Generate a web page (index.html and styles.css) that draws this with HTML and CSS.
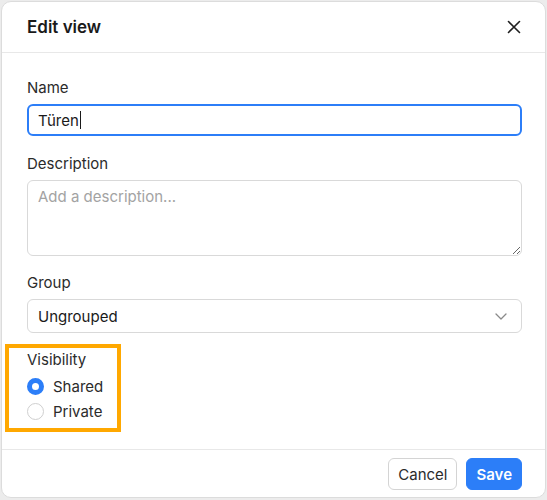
FILE: index.html
```html
<!DOCTYPE html>
<html lang="en">
<head>
    <meta charset="UTF-8">
    <meta name="viewport" content="width=device-width, initial-scale=1.0">
    <title>Edit view</title>
    <link rel="stylesheet" href="styles.css">
</head>
<body>
    <div class="dialog">
        <!-- Dialog header -->
        <div class="dialog-header">
            <h2 class="dialog-title">Edit view</h2>
            <button type="button" class="close-btn" aria-label="Close">
                <svg width="14" height="14" viewBox="0 0 14 14" fill="none" stroke="#1f1f1f" stroke-width="1.6" stroke-linecap="round">
                    <path d="M1.5 1.5 L12.5 12.5 M12.5 1.5 L1.5 12.5"/>
                </svg>
            </button>
        </div>

        <!-- Form fields -->
        <form class="dialog-body" id="edit-view">
            <div class="field">
                <label for="view-name">Name</label>
                <div class="name-box">
                    <span class="name-value">Türen</span><span class="caret"></span>
                </div>
            </div>

            <div class="field">
                <label for="view-description">Description</label>
                <textarea id="view-description" class="text-area" placeholder="Add a description..."></textarea>
            </div>

            <div class="field">
                <label for="view-group">Group</label>
                <div class="select-wrap">
                    <select id="view-group" class="select-input">
                        <option>Ungrouped</option>
                    </select>
                    <svg class="chevron" width="12" height="7" viewBox="0 0 12 7" fill="none" stroke="#8a8a8a" stroke-width="1.3" stroke-linecap="round" stroke-linejoin="round">
                        <path d="M1 1 L6 6 L11 1"/>
                    </svg>
                </div>
            </div>

            <div class="visibility">
                <div class="group-label">Visibility</div>
                <div class="radio-list">
                    <label class="radio-row">
                        <input type="radio" name="visibility" value="shared" checked>
                        <span>Shared</span>
                    </label>
                    <label class="radio-row">
                        <input type="radio" name="visibility" value="private">
                        <span>Private</span>
                    </label>
                </div>
            </div>
        </form>

        <!-- Footer actions -->
        <div class="dialog-footer">
            <button type="button" class="btn btn-cancel">Cancel</button>
            <button type="submit" form="edit-view" class="btn btn-save">Save</button>
        </div>
    </div>
</body>
</html>
```

FILE: styles.css
```css
/* Page */
body {
    margin: 0;
    background-color: #ececec;
    font-family: Inter, "Noto Sans", sans-serif;
    color: #2b2b2b;
}

.dialog {
    width: 545px;
    height: 497px;
    margin: 1px 0 0 1px;
    box-sizing: border-box;
    background-color: #fff;
    border: 1px solid #dcdcdc;
    border-radius: 10px;
    display: flex;
    flex-direction: column;
}

/* Header */
.dialog-header {
    height: 50px;
    display: flex;
    align-items: center;
    justify-content: space-between;
    padding: 0 20px 0 25px;
    border-bottom: 1px solid #e8e8e8;
}

.dialog-title {
    margin: 0;
    font-size: 17px;
    font-weight: 600;
    color: #1a1a1a;
}

.close-btn {
    border: none;
    background: none;
    padding: 4px;
    display: flex;
    cursor: pointer;
}

/* Body */
.dialog-body {
    flex: 1;
    padding: 25px 23px 0 25px;
    display: flex;
    flex-direction: column;
}

.field {
    display: flex;
    flex-direction: column;
    gap: 6px;
    margin-bottom: 18px;
}

.field:nth-child(2) {
    margin-bottom: 17px;
}

label,
.group-label {
    font-size: 15px;
    line-height: 20px;
    color: #2b2b2b;
}

.name-box,
.text-area,
.select-input {
    width: 100%;
    box-sizing: border-box;
    border: 1px solid #d9d9d9;
    border-radius: 6px;
    font-family: inherit;
    font-size: 15px;
    color: #1a1a1a;
    background-color: #fff;
}

/* Focused name field with caret */
.name-box {
    height: 32px;
    padding: 0 9px;
    border: 2px solid #2c7ef8;
    display: flex;
    align-items: center;
}

.caret {
    width: 1px;
    height: 18px;
    margin-left: 1px;
    background-color: #1a1a1a;
}

.text-area {
    height: 76px;
    padding: 6px 10px;
    resize: vertical;
}

.text-area::placeholder {
    color: #a3a3a3;
}

.select-wrap {
    position: relative;
}

.select-input {
    height: 34px;
    padding: 0 10px;
    appearance: none;
    -webkit-appearance: none;
}

.chevron {
    position: absolute;
    right: 15px;
    top: 14px;
    pointer-events: none;
}

/* Visibility radios, boxed */
.visibility {
    width: 116px;
    box-sizing: border-box;
    margin: -7px 0 0 -22px;
    padding: 2px 0 4px 18px;
    border: 4px solid #ffa800;
}

.radio-list {
    margin-top: 4px;
}

.radio-row {
    display: flex;
    align-items: center;
    gap: 9px;
    height: 25px;
}

.radio-row input {
    appearance: none;
    -webkit-appearance: none;
    width: 17px;
    height: 17px;
    margin: 0;
    border-radius: 50%;
    border: 1px solid #cfcfcf;
    background-color: #fff;
    box-sizing: border-box;
}

.radio-row input:checked {
    border: 5.5px solid #2c7ef8;
}

/* Footer */
.dialog-footer {
    display: flex;
    justify-content: flex-end;
    gap: 9px;
    padding: 8px 23px 7px 0;
    border-top: 1px solid #e8e8e8;
}

.btn {
    height: 32px;
    border-radius: 6px;
    font-family: inherit;
    font-size: 15px;
    padding: 0 9px;
    cursor: pointer;
}

.btn-cancel {
    background-color: #fff;
    border: 1px solid #d4d4d4;
    color: #2b2b2b;
}

.btn-save {
    background-color: #2c7ef8;
    border: 1px solid #2c7ef8;
    color: #fff;
    font-weight: 600;
}
```
